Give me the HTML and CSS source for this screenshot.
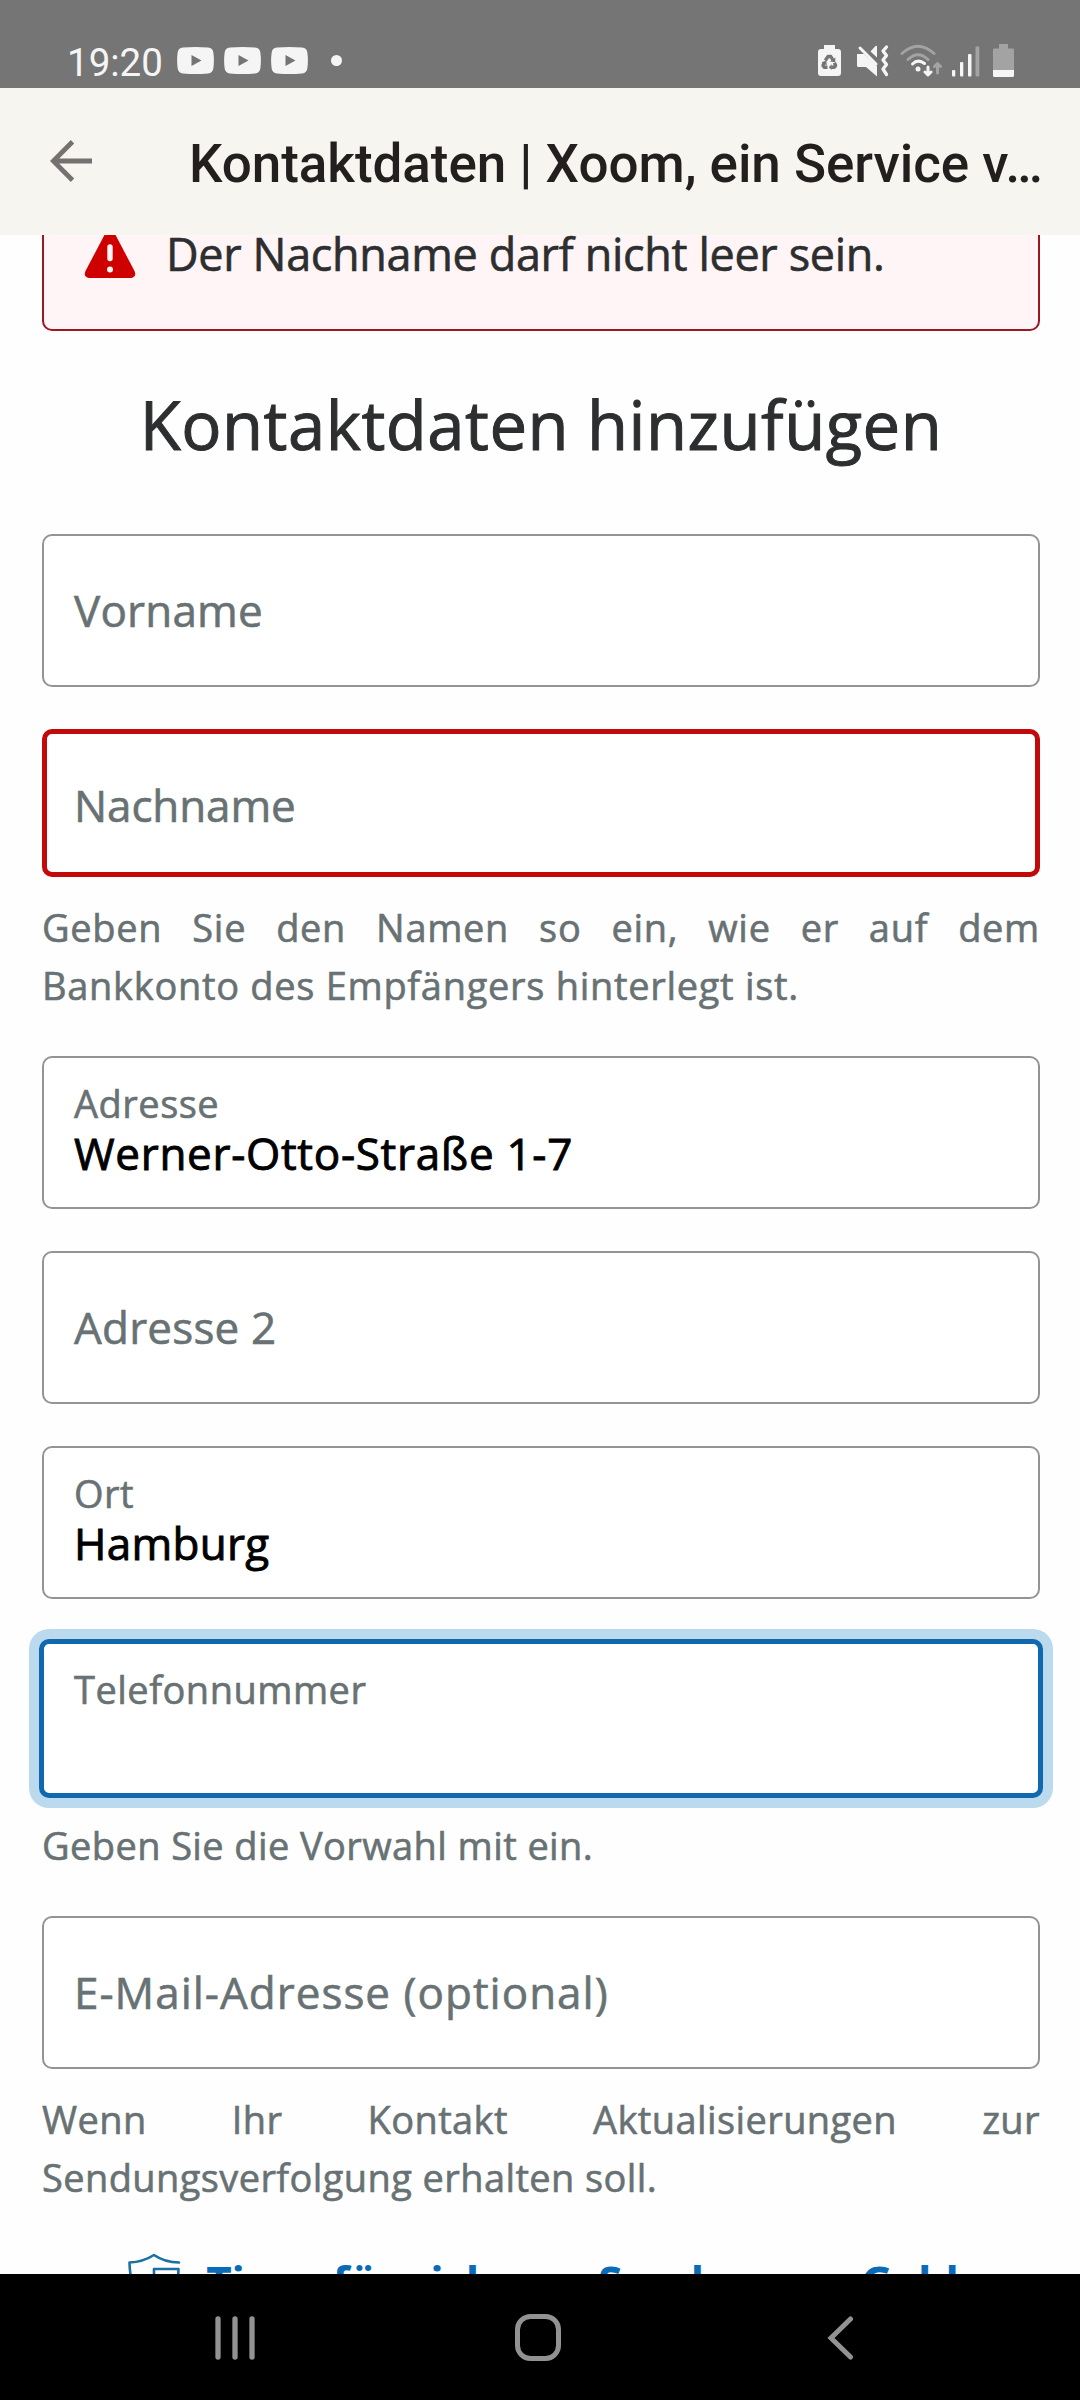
FILE: index.html
```html
<!DOCTYPE html>
<html lang="de">
<head>
    <meta charset="UTF-8">
    <meta name="viewport" content="width=device-width, initial-scale=1.0">
    <title>Kontaktdaten | Xoom, ein Service von PayPal</title>
    <link rel="stylesheet" href="styles.css">
</head>
<body>

<div class="status-bar">
    <span class="time">19:20</span>
    <div class="notifications">
        <svg width="37" height="27" viewBox="0 0 37 27"><path fill="#f5f5f5" fill-rule="evenodd" d="M6 .6Q18.500-.6 31 .6Q36 1 36.400 6Q37.400 13.500 36.400 21Q36 26 31 26.400Q18.500 27.600 6 26.400Q1 26 .6 21Q-.4 13.500 .6 6Q1 1 6 .6ZM14.500 8V19L24.500 13.500Z"/></svg>
        <svg width="37" height="27" viewBox="0 0 37 27"><path fill="#f5f5f5" fill-rule="evenodd" d="M6 .6Q18.500-.6 31 .6Q36 1 36.400 6Q37.400 13.500 36.400 21Q36 26 31 26.400Q18.500 27.600 6 26.400Q1 26 .6 21Q-.4 13.500 .6 6Q1 1 6 .6ZM14.500 8V19L24.500 13.500Z"/></svg>
        <svg width="37" height="27" viewBox="0 0 37 27"><path fill="#f5f5f5" fill-rule="evenodd" d="M6 .6Q18.500-.6 31 .6Q36 1 36.400 6Q37.400 13.500 36.400 21Q36 26 31 26.400Q18.500 27.600 6 26.400Q1 26 .6 21Q-.4 13.500 .6 6Q1 1 6 .6ZM14.500 8V19L24.500 13.500Z"/></svg>
    </div>
    <span class="dot"></span>
    <div class="system-icons">
        <!-- battery saver -->
        <svg width="23" height="33" viewBox="0 0 23 33">
            <path fill="#f5f5f5" d="M6 1H17V5H20Q23 5 23 8V29Q23 32 20 32H3Q0 32 0 29V8Q0 5 3 5H6Z"/>
            <path fill="none" stroke="#757575" stroke-width="3.400" stroke-linejoin="round" d="M7.300 16.500L10 12.500H12.800L15.200 16.500M16.400 18.800L17.600 21.500L16.500 23.200H13.200M9.500 23.200H6.200L5 21.500L6.300 18.800"/>
            <path fill="#757575" d="M12 17.500L17.300 18.300L17.300 13.500ZM13.600 20.200V26L10.800 23.200ZM3.500 18.300L8.300 16.600L8.800 21.300Z"/>
        </svg>
        <!-- vibrate -->
        <svg class="mute" width="32" height="33" viewBox="0 0 32 33">
            <path fill="#f5f5f5" d="M0 10H7L20 22V32.500L9 23H1.500Q0 23 0 21.500ZM13.500 7.500L18.500 2Q20 1 20 3V13.500Z"/>
            <path fill="none" stroke="#f5f5f5" stroke-width="3" stroke-linecap="round" d="M3 4L19 20"/>
            <path fill="none" stroke="#f5f5f5" stroke-width="3.300" stroke-linecap="round" stroke-linejoin="round" d="M29.500 3L26 7L29.500 11.500L26 16L29.500 20.500L26 25L29.500 30.500"/>
        </svg>
        <!-- wifi -->
        <svg class="wifi" width="42" height="33" viewBox="0 0 42 33">
            <g fill="none" stroke-width="3" stroke-linecap="round">
                <path stroke="#a3a3a3" d="M2 9.500Q18 -5 34 9.500M8 15.500Q18 6 28 15.500"/>
                <path stroke="#f5f5f5" d="M12.500 20Q18 14.500 24.500 19.500"/>
                <path stroke="#f5f5f5" stroke-linejoin="round" d="M28 23V31M25 28L28 31L31 28"/>
                <path stroke="#a3a3a3" stroke-linejoin="round" d="M37.500 29V19.500M34.500 22.500L37.500 19.500L40.500 22.500"/>
            </g>
            <circle cx="18" cy="25" r="2.500" fill="#f5f5f5"/>
        </svg>
        <!-- signal -->
        <svg class="signal" width="28" height="33" viewBox="0 0 28 33">
            <g fill="#f5f5f5">
                <rect x="0" y="26" width="3.300" height="6.500" rx="1"/>
                <rect x="8" y="18" width="3.300" height="14.500" rx="1"/>
                <rect x="16" y="10" width="3.500" height="22.500" rx="1"/>
            </g>
            <rect x="23.500" y="2.500" width="3.800" height="30" rx="1" fill="#a3a3a3"/>
        </svg>
        <!-- battery -->
        <svg class="battery" width="21" height="33" viewBox="0 0 21 33">
            <path fill="#a3a3a3" d="M6 0H15V4.500H20Q21 4.500 21 6V26H0V6Q0 4.500 1 4.500H6Z"/>
            <path fill="#f5f5f5" d="M0 26H21V31.500Q21 33 19.500 33H1.500Q0 33 0 31.500Z"/>
        </svg>
    </div>
</div>

<header class="app-bar">
    <svg class="back" width="42" height="42" viewBox="0 0 42 42"><path fill="none" stroke="#757170" stroke-width="4.800" d="M42 21H4M22.500 1.700L3.300 21L22.500 40.300"/></svg>
    <h1>Kontaktdaten | Xoom, ein Service v…</h1>
</header>

<main>
    <div class="alert">
        <svg width="52" height="48" viewBox="0 0 52 48"><path fill="#cf0000" d="M21.500 3Q26-3 30.500 3L50.500 41Q53 47 47 48H5Q-1 47 1.500 41Z"/><path stroke="#fff5f6" stroke-width="5.400" stroke-linecap="round" d="M26 17V28.500"/><circle cx="26" cy="39.500" r="3" fill="#fff5f6"/></svg>
        <span>Der Nachname darf nicht leer sein.</span>
    </div>

    <h2>Kontaktdaten hinzufügen</h2>

    <form>
        <div class="field"><span class="placeholder">Vorname</span></div>
        <div class="field error"><span class="placeholder tight">Nachname</span></div>
        <p class="hint">Geben Sie den Namen so ein, wie er auf dem Bankkonto des Empfängers hinterlegt ist.</p>
        <div class="field filled">
            <span class="label">Adresse</span>
            <span class="value">Werner-Otto-Straße 1-7</span>
        </div>
        <div class="field"><span class="placeholder">Adresse 2</span></div>
        <div class="field filled">
            <span class="label">Ort</span>
            <span class="value tight">Hamburg</span>
        </div>
        <div class="field filled focused"><span class="label">Telefonnummer</span></div>
        <p class="hint narrow">Geben Sie die Vorwahl mit ein.</p>
        <div class="field email"><span class="placeholder wide">E-Mail-Adresse (optional)</span></div>
        <p class="hint narrow">Wenn Ihr Kontakt Aktualisierungen zur Sendungsverfolgung erhalten soll.</p>
    </form>

    <a class="tips">
        <svg width="54" height="60" viewBox="0 0 54 60"><path fill="none" stroke="#1a6fa3" stroke-width="2.600" stroke-linejoin="round" stroke-linecap="round" d="M51 9.500Q37 9.500 26 2Q15 9 1.500 9.500Q2 44 26 57Q50 44 50.500 16H26V57"/></svg>
        <span>Tipps für sicheres Senden von Geld</span>
    </a>
</main>

<nav class="nav-bar">
    <svg width="40" height="44" viewBox="0 0 40 44"><path stroke="#929292" stroke-width="5.300" stroke-linecap="round" d="M3 3V41M20 3V41M37 3V41"/></svg>
    <svg class="home" width="46" height="47" viewBox="0 0 46 47"><rect x="2.500" y="2.500" width="41" height="42" rx="13" fill="none" stroke="#929292" stroke-width="5"/></svg>
    <svg width="27" height="44" viewBox="0 0 27 44"><path fill="none" stroke="#929292" stroke-width="5" stroke-linecap="round" d="M23.500 3L4 22L23.500 41"/></svg>
</nav>

</body>
</html>
```
FILE: styles.css
```css
* {
    box-sizing: border-box;
}
body {
    margin: 0;
    height: 2400px;
    display: flex;
    flex-direction: column;
    overflow: hidden;
    background-color: #fefefe;
    font-family: 'Open Sans', 'Noto Sans', sans-serif;
}
svg {
    display: block;
    flex-shrink: 0;
}

/* status bar */
.status-bar {
    height: 88px;
    flex-shrink: 0;
    display: flex;
    align-items: flex-start;
    padding: 44px 66px 0 67px;
    background-color: #757575;
}
.time {
    width: 110px;
    font-family: Roboto, sans-serif;
    font-size: 38.5px;
    line-height: 38px;
    color: #f5f5f5;
}
.notifications {
    display: flex;
    gap: 10px;
    margin-top: 3px;
}
.dot {
    width: 11px;
    height: 11px;
    margin: 11px 0 0 23px;
    border-radius: 50%;
    background-color: #f5f5f5;
}
.system-icons {
    display: flex;
    margin-left: auto;
}
.mute {
    margin-left: 16px;
}
.wifi {
    margin-left: 11px;
}
.signal {
    margin-left: 10px;
}
.battery {
    margin-left: 13px;
}

/* app bar */
.app-bar {
    height: 147px;
    flex-shrink: 0;
    display: flex;
    align-items: center;
    padding-left: 50px;
    background-color: #f7f5f0;
}
.back {
    margin-bottom: 2px;
}
.app-bar h1 {
    margin: 4px 0 0 97px;
    font-family: Roboto, sans-serif;
    font-size: 53px;
    font-weight: 500;
    letter-spacing: -0.05px;
    line-height: 64px;
    white-space: nowrap;
    color: #231f1e;
}

/* page content */
main {
    flex: 1;
    min-height: 0;
    overflow: hidden;
    padding: 0 40px 0 42px;
    -webkit-text-stroke-width: 0.6px;
}
.alert {
    height: 160px;
    margin-top: -64px;
    display: flex;
    align-items: center;
    padding: 6px 0 0 40px;
    border: 2px solid #9c1722;
    border-radius: 10px;
    background-color: #fff5f6;
    font-size: 45px;
    letter-spacing: -0.35px;
    line-height: 60px;
    color: #2c2e2f;
}
.alert span {
    margin-left: 30px;
}
h2 {
    margin: 53px 0 70px;
    font-size: 67px;
    font-weight: 400;
    line-height: 80px;
    letter-spacing: 0.5px;
    text-align: center;
    color: #2c2e2f;
    -webkit-text-stroke-width: 1px;
}
.field {
    height: 153px;
    margin-bottom: 42px;
    padding: 0 30px 2px;
    display: flex;
    flex-direction: column;
    justify-content: center;
    border: 2px solid #929496;
    border-radius: 10px;
    background-color: #fff;
}
.placeholder {
    font-size: 44px;
    line-height: 60px;
    letter-spacing: 0.2px;
    color: #687173;
}
.placeholder.tight {
    letter-spacing: -0.1px;
}
.placeholder.wide {
    letter-spacing: 1px;
}
.filled {
    justify-content: flex-start;
    padding-top: 21px;
}
.label {
    font-size: 38px;
    line-height: 48px;
    letter-spacing: 0.5px;
    color: #687173;
}
.value {
    font-size: 44px;
    line-height: 52px;
    letter-spacing: 0.7px;
    color: #000;
    -webkit-text-stroke-width: 0.9px;
}
.value.tight {
    letter-spacing: 0.3px;
}
.error {
    height: 148px;
    padding: 3px 27px 0;
    border: 5px solid #c30a0a;
    margin-bottom: 21px;
}
.focused {
    height: 159px;
    margin: -2px -3px 18px;
    padding: 21px 30px 0;
    border: 5px solid #1069af;
    box-shadow: 0 0 0 10px #bbdaee;
}
.hint {
    margin: 0 0 42px;
    font-size: 38px;
    line-height: 58px;
    letter-spacing: 0.7px;
    text-align: justify;
    color: #687173;
}
.email {
    margin-bottom: 21px;
}
.hint.narrow {
    letter-spacing: 0.4px;
}
.tips {
    display: flex;
    justify-content: center;
    margin-top: 44px;
    padding-left: 5px;
    font-size: 44px;
    font-weight: 700;
    line-height: 60px;
    letter-spacing: -0.3px;
    white-space: nowrap;
    color: #0a6cb8;
    -webkit-text-stroke-width: 0;
}
.tips svg {
    margin-top: 3px;
}
.tips span {
    margin-left: 24px;
    padding-top: 2px;
}

/* android navigation */
.nav-bar {
    height: 126px;
    flex-shrink: 0;
    display: flex;
    align-items: center;
    justify-content: space-between;
    padding: 1px 226px 0 215px;
    background-color: #000;
}
.home {
    margin-right: 6px;
}
```
